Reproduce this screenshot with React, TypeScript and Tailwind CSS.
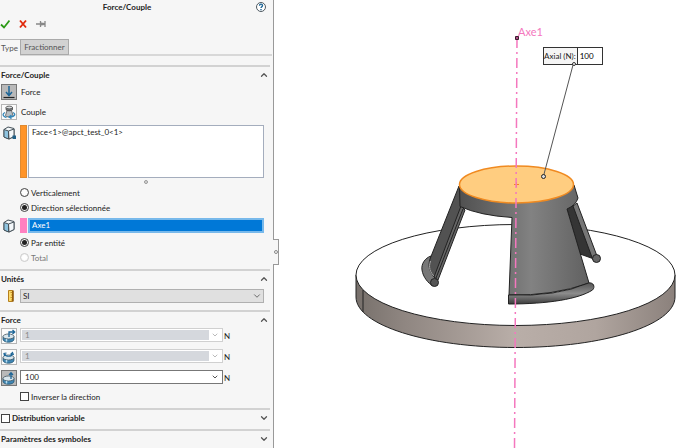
import React, { useState } from 'react';
import { ChevronDown, ChevronUp } from 'lucide-react';

const iconButton = 'flex size-4 shrink-0 items-center justify-center border';

function CubeIcon({ dot = false }: { dot?: boolean }) {
  return (
    <svg viewBox="0 0 16 16" className="size-4 shrink-0" aria-hidden="true">
      <path d="M3 4.500 7 2l6 1.500v8L8 14 3 12Z" fill="#f4f8fa" stroke="#46525a" strokeLinejoin="round" />
      <path d="M7.500 6 13 4v7.500l-5 2.500Z" fill="#f4f8fa" stroke="#46525a" strokeLinejoin="round" />
      <path d="M3 4.500 7.500 6v8L3 12Z" fill="#8fc4e0" stroke="#46525a" strokeLinejoin="round" />
      {dot && <path d="M11.500 10.500h3.500v3.500h-3.500Z" fill="#1f5f86" />}
    </svg>
  );
}

function DownForceIcon() {
  return (
    <svg viewBox="0 0 14 14" className="size-3.5" aria-hidden="true">
      <path d="M7 1v9M4 7l3 3.500L10 7" fill="none" stroke="#1d6596" strokeWidth="1.500" />
      <path d="M1.500 12.500h11" stroke="#222" strokeWidth="1.200" />
    </svg>
  );
}

function TorqueIcon() {
  return (
    <svg viewBox="0 0 14 14" className="size-3.5" aria-hidden="true">
      <path d="M5 5.500h4.500l1.500 5c-1 2-6.500 2-7.500 0Z" fill="#b9bfc3" stroke="#555" strokeWidth=".8" />
      <path d="M4 2.500v2.200c.5 1.500 6 1.500 6.500 0V2.500Z" fill="#777d81" stroke="#444" strokeWidth=".8" />
      <ellipse cx="7.200" cy="2.500" rx="3.200" ry="1.400" fill="#d9dcde" stroke="#444" strokeWidth=".8" />
      <path d="M3 7.500C0 9 .5 11.500 4.500 12.500M11 7.500c3 1.500 2 4-2.500 4.500M9.500 10 7 12l2.500 1.600" fill="none" stroke="#3286b8" strokeWidth="1.300" />
    </svg>
  );
}

function DiscIcon({ kind }: { kind: 'radial' | 'around' | 'axial' }) {
  return (
    <svg viewBox="0 0 14 14" className="size-3.5" aria-hidden="true">
      <path d="M1 7.500v2.700c0 4 11 4 11 0V7.500Z" fill="#3f86b4" stroke="#27556f" strokeWidth=".8" />
      <ellipse cx="6.500" cy="7.500" rx="5.500" ry="2.500" fill="#d8e6ed" stroke="#44545e" strokeWidth=".8" />
      <path d="M4.500 10v2.500" stroke="#b8dcee" strokeWidth="1.500" />
      {kind === 'radial' && <path d="M7 8V3h5.500M10.500 1l2.200 2-2.200 2" fill="none" stroke="#1d6596" strokeWidth="1.300" />}
      {kind === 'around' && <path d="M3 4c0 3 7 3 7 0M8.500 4.500 10.500 2.500l1 2.500M4.500 3l-2.500.5.500 2.500" fill="none" stroke="#1d6596" strokeWidth="1.200" />}
      {kind === 'axial' && <path d="M9 8V2M7 4l2-2.200L11 4" fill="none" stroke="#1d6596" strokeWidth="1.300" />}
    </svg>
  );
}

function RulerIcon() {
  return (
    <svg viewBox="0 0 8 14" className="h-3.5 w-2" aria-hidden="true">
      <path d="M1.500 1.500h4v11h-4Z" fill="#fbd96a" stroke="#b57f1c" />
      <path d="M6 1.500v11" stroke="#8a5206" strokeWidth="1.500" />
      <path d="M3.500 3.500h2M4 6h1.500M3.500 8.500h2M4 11h1.500" stroke="#a86b10" strokeWidth=".7" />
    </svg>
  );
}

function Section({ title, open = true, children }: { title: React.ReactNode; open?: boolean; children?: React.ReactNode }) {
  const Chevron = open ? ChevronUp : ChevronDown;
  return (
    <section className="mr-[3px] border-t-2 border-[#d2d2d2]">
      <div className="flex h-4 items-center justify-between pl-px pr-px">
        <h2 className="font-bold">{title}</h2>
        <button type="button" aria-label={open ? 'Réduire' : 'Développer'} aria-expanded={open} className="text-[#555]">
          <Chevron className="size-2.5" strokeWidth={3} />
        </button>
      </div>
      {children}
    </section>
  );
}

function Radio({ label, group, checked = false, disabled = false, onChange }: { label: string; group: string; checked?: boolean; disabled?: boolean; onChange?: () => void }) {
  return (
    <label className={disabled ? 'flex h-[15px] items-center gap-0.5 text-[#777]' : 'flex h-[15px] items-center gap-0.5'}>
      <input
        type="radio"
        name={group}
        checked={checked}
        disabled={disabled}
        onChange={onChange}
        className="size-[9px] appearance-none rounded-full border border-[#444] bg-white bg-clip-content p-px checked:bg-[#222] disabled:border-[#ccc]"
      />
      {label}
    </label>
  );
}

function Combo({ label, value, disabled = false, pressed = false, children }: { label: string; value: string; disabled?: boolean; pressed?: boolean; children: React.ReactNode }) {
  return (
    <div className="flex h-4 items-start gap-[3px] pl-px">
      <button type="button" aria-label={label} aria-pressed={pressed} className={pressed ? `${iconButton} border-[#777] bg-[#b9b9b9]` : `${iconButton} border-[#b5b5b5] bg-[#fbfbfb]`}>
        {children}
      </button>
      <div className={disabled ? 'flex h-3.5 w-[203px] border border-[#d0d0d0] bg-white p-px' : 'flex h-3.5 w-[203px] border border-[#777] bg-white p-px'}>
        <input
          aria-label={label}
          defaultValue={value}
          disabled={disabled}
          className="w-0 min-w-0 flex-1 bg-white pl-[3px] text-[#222] outline-none disabled:bg-[#d5d8dd] disabled:text-[#888]"
        />
        <button type="button" disabled={disabled} aria-label="Ouvrir la liste" className="flex w-3 items-center justify-center text-[#555] disabled:text-[#bbb]">
          <ChevronDown className="size-2" strokeWidth={3} />
        </button>
      </div>
      <span className="-ml-0.5 self-center">N</span>
    </div>
  );
}

function Model() {
  return (
    <svg viewBox="274 0 416 448" className="block h-full w-full" role="img" aria-label="Modèle 3D">
      <defs>
        <linearGradient id="rim" x1="0" x2="1">
          <stop offset="0" stopColor="#77706b" />
          <stop offset=".15" stopColor="#8f8681" />
          <stop offset=".5" stopColor="#b9aea8" />
          <stop offset=".75" stopColor="#b0a59f" />
          <stop offset="1" stopColor="#8b817c" />
        </linearGradient>
        <linearGradient id="cone" gradientUnits="userSpaceOnUse" x1="459" x2="590" y1="0" y2="0">
          <stop offset="0" stopColor="#505050" />
          <stop offset=".3" stopColor="#6a6a6a" />
          <stop offset=".55" stopColor="#828282" />
          <stop offset="1" stopColor="#606060" />
        </linearGradient>
        <linearGradient id="tube" x1="0" y1="0" x2="0" y2="1">
          <stop offset="0" stopColor="#555" />
          <stop offset=".5" stopColor="#8c8c8c" />
          <stop offset="1" stopColor="#3c3c3c" />
        </linearGradient>
      </defs>
      <g stroke="#222" strokeLinejoin="round">
        <path d="M356 275v22c0 28 71 50.500 159.500 50.500S675 325 675 297v-22Z" fill="url(#rim)" />
        <ellipse cx="515.500" cy="275" rx="159.500" ry="50.500" fill="#fff" />
        <path d="M363 290v22" fill="none" />
        <path d="M431 256c-6 2-10 8-9 14 1 7 6 13 11 16l4-8c-6-5-9-10-6-17Z" fill="#777" />
        <path d="M459 186 430 259c-2 7-1 12 5 19l28-68 5-9Z" fill="#525252" />
        <path d="M430.500 261c-2 6-1 11 4.500 16" fill="none" stroke="#aaa" />
        <path d="m461 206-27 71 4 3 27-70Z" fill="#666" />
        <path d="m463 209-27 69" />
        <circle cx="434.500" cy="282.500" r="4" fill="#555" />
        <path d="m567 209 7-4 20 54-14-5Z" fill="#353535" />
        <path d="m573 206 4-3 20 53-4 4Z" fill="#767676" />
        <circle cx="596.500" cy="258.500" r="4" fill="#666" />
        <path d="M459.500 186 460 206.500q20 9 52 11L509 295q44 1 80-12l-22-74q9-4 11-11l-4-13Z" fill="url(#cone)" />
        <path d="M508.500 295q48 2 80-12c5-1 7 4 4 7-14 9-44 14-84 14Z" fill="url(#tube)" />
      </g>
      <ellipse cx="516.500" cy="184.500" rx="57" ry="18.500" fill="#ffcd80" stroke="#f08a20" strokeWidth="1.500" />
      <path d="M514 184.500h5M516.500 182v5" stroke="#f58220" />
      <path d="M517 38 514.500 448" stroke="#f477be" strokeWidth="1.500" strokeDasharray="10 4 2 4" />
      <path d="M515.500 36.500h3v3h-3Z" fill="#b34c87" stroke="#3b1c2d" />
      <text x="518" y="36" fontSize="11" fill="#f477be" fontFamily="Lato, sans-serif">Axe1</text>
      <path d="m573 65-29.500 111" stroke="#555" />
      <circle cx="543.500" cy="176.500" r="2" fill="#ddd" stroke="#222" />
    </svg>
  );
}

export default function App() {
  const [direction, setDirection] = useState('selected');
  return (
    <div className="flex min-h-screen bg-white font-['Lato','Open_Sans',sans-serif] text-[8px] leading-[12px] text-[#222]">
      <aside className="relative w-[274px] shrink-0 border-r border-[#999] bg-[#f6f6f6]">
        <header className="flex h-[13px] items-center pr-[5px]">
          <h1 className="flex-1 text-center font-bold">Force/Couple</h1>
          <button type="button" aria-label="Aide" className="flex w-3.5 justify-center">
            <svg viewBox="0 0 12 12" className="size-3" aria-hidden="true">
              <circle cx="6" cy="6" r="4.500" fill="#fff" stroke="#4f5a62" />
              <path d="M4.500 4.700c0-2 3-2 3-.2C7.500 5.700 6 5.700 6 7M6 8v1.300" fill="none" stroke="#1d6596" strokeWidth="1.400" />
            </svg>
          </button>
        </header>
        <div className="flex h-[26px] items-center gap-2 pb-1">
          <button type="button" aria-label="OK">
            <svg viewBox="0 0 10 10" className="size-2.5" aria-hidden="true"><path d="m1 5.500 3 3L9.500 1.500" fill="none" stroke="#2c9a16" strokeWidth="1.800" /></svg>
          </button>
          <button type="button" aria-label="Annuler">
            <svg viewBox="0 0 10 10" className="size-2.5" aria-hidden="true"><path d="m2 1.500 6 7M8 1.500l-6 7" fill="none" stroke="#e02a0c" strokeWidth="1.900" /></svg>
          </button>
          <button type="button" aria-label="Garder visible">
            <svg viewBox="0 0 10 10" className="size-2.5" aria-hidden="true"><path d="M0 5h4M4.500 2v6M9 2v6" stroke="#888" strokeWidth="1.300" /><path d="M5 3.500 9 4v2L5 6.500Z" fill="#888" /></svg>
          </button>
        </div>
        <div role="tablist" className="mr-px flex h-[17px] border-b-2 border-[#d8d8d8]">
          <button type="button" role="tab" aria-selected="true" className="-mb-0.5 w-5 border-t border-[#bbb] bg-[#f6f6f6] pl-px text-left text-[#555]">Type</button>
          <button type="button" role="tab" aria-selected="false" className="-mb-px w-[49px] border border-[#aaa] bg-[#d2d2d2] text-[#555]">Fractionner</button>
        </div>
        <div className="pt-[9px]">
          <Section title="Force/Couple">
            <div className="flex flex-col gap-1 pl-px pt-px">
              <label className="flex h-4 items-center gap-1">
                <button type="button" aria-pressed="true" aria-label="Force" className={`${iconButton} border-[#777] bg-[#b9b9b9]`}><DownForceIcon /></button>
                Force
              </label>
              <label className="flex h-4 items-center gap-1">
                <button type="button" aria-pressed="false" aria-label="Couple" className={`${iconButton} border-[#b5b5b5] bg-[#fbfbfb]`}><TorqueIcon /></button>
                Couple
              </label>
            </div>
            <div className="mr-1.5 mt-[5px] flex h-[53px] gap-[3px] pl-px">
              <CubeIcon dot />
              <div className="flex flex-1 gap-px">
                <span className="w-[7px] border border-[#e08a30] bg-[#ff9429]" />
                <ul role="listbox" aria-label="Faces sélectionnées" className="flex-1 border border-[#a4adbd] bg-white pl-[3px]">
                  <li role="option" aria-selected="false">Face&lt;1&gt;@apct_test_0&lt;1&gt;</li>
                </ul>
              </div>
            </div>
            <div className="flex h-[7px] items-center justify-center pl-[22px]">
              <span className="size-1 rounded-full border border-[#999] bg-[#ddd]" />
            </div>
            <div className="pl-5">
              <Radio group="direction" label="Verticalement" checked={direction === 'vertical'} onChange={() => setDirection('vertical')} />
              <Radio group="direction" label="Direction sélectionnée" checked={direction === 'selected'} onChange={() => setDirection('selected')} />
            </div>
            <div className="mr-1.5 mt-[3px] flex h-[15px] gap-[3px] pl-px">
              <CubeIcon />
              <div className="flex flex-1 gap-px">
                <span className="w-[7px] bg-[#ff80c0]" />
                <ul role="listbox" aria-label="Axe de direction" className="flex-1 border-2 border-[#78b9eb] bg-[#0078d7] pl-0.5 leading-[11px] text-white">
                  <li role="option" aria-selected="true">Axe1</li>
                </ul>
              </div>
            </div>
            <div className="pb-1 pl-5 pt-0.5">
              <Radio group="scope" label="Par entité" checked onChange={() => undefined} />
              <Radio group="scope" label="Total" disabled />
            </div>
          </Section>
          <Section title="Unités">
            <div className="mr-1.5 flex items-center pb-[7px] pt-0.5">
              <span className="flex w-5 justify-center pl-0.5"><RulerIcon /></span>
              <div className="relative flex-1">
                <select aria-label="Unités" className="block h-3.5 w-full appearance-none border border-[#b0b0b0] bg-[#e0e0e0] pl-0.5 leading-[12px]">
                  <option>SI</option>
                </select>
                <ChevronDown className="pointer-events-none absolute right-0.5 top-0.5 size-2.5 text-[#555]" strokeWidth={2} />
              </div>
            </div>
          </Section>
          <Section title="Force">
            <div className="flex flex-col gap-[5px]">
              <Combo label="Force radiale" value="1" disabled><DiscIcon kind="radial" /></Combo>
              <Combo label="Force circonférentielle" value="1" disabled><DiscIcon kind="around" /></Combo>
              <Combo label="Force axiale" value="100" pressed><DiscIcon kind="axial" /></Combo>
            </div>
            <div className="pb-1 pl-5 pt-[3px]">
              <label className="flex h-[15px] items-center gap-0.5">
                <input type="checkbox" className="size-[9px] appearance-none border border-[#444] bg-white checked:bg-[#444]" />
                Inverser la direction
              </label>
            </div>
          </Section>
          <Section
            open={false}
            title={
              <label className="flex items-center gap-0.5">
                <input type="checkbox" className="size-[9px] appearance-none border border-[#444] bg-white checked:bg-[#444]" />
                Distribution variable
              </label>
            }
          >
            <div className="h-[3px]" />
          </Section>
          <Section title="Paramètres des symboles" open={false} />
        </div>
        <button type="button" aria-label="Masquer le panneau" className="absolute -right-1.5 top-[239px] flex h-[26px] w-1.5 items-center justify-center border border-l-0 border-[#999] bg-[#f6f6f6]">
          <span className="size-1 rounded-full border border-[#888]" />
        </button>
      </aside>
      <main className="relative min-w-0 flex-1">
        <Model />
        <div className="absolute left-[64.600%] top-[10.500%] flex h-[18px] w-[60px] items-stretch border border-[#333] bg-white">
          <label htmlFor="axial" className="flex w-[34px] items-center justify-end whitespace-nowrap border-r border-[#333] bg-[#f5f5f5] pr-px">Axial (N):</label>
          <input id="axial" defaultValue="100" className="w-0 min-w-0 flex-1 pl-0.5 text-black outline-none" />
          <span className="absolute -bottom-0.5 left-[28px] size-1 rounded-full border border-[#333] bg-white" />
        </div>
      </main>
    </div>
  );
}
